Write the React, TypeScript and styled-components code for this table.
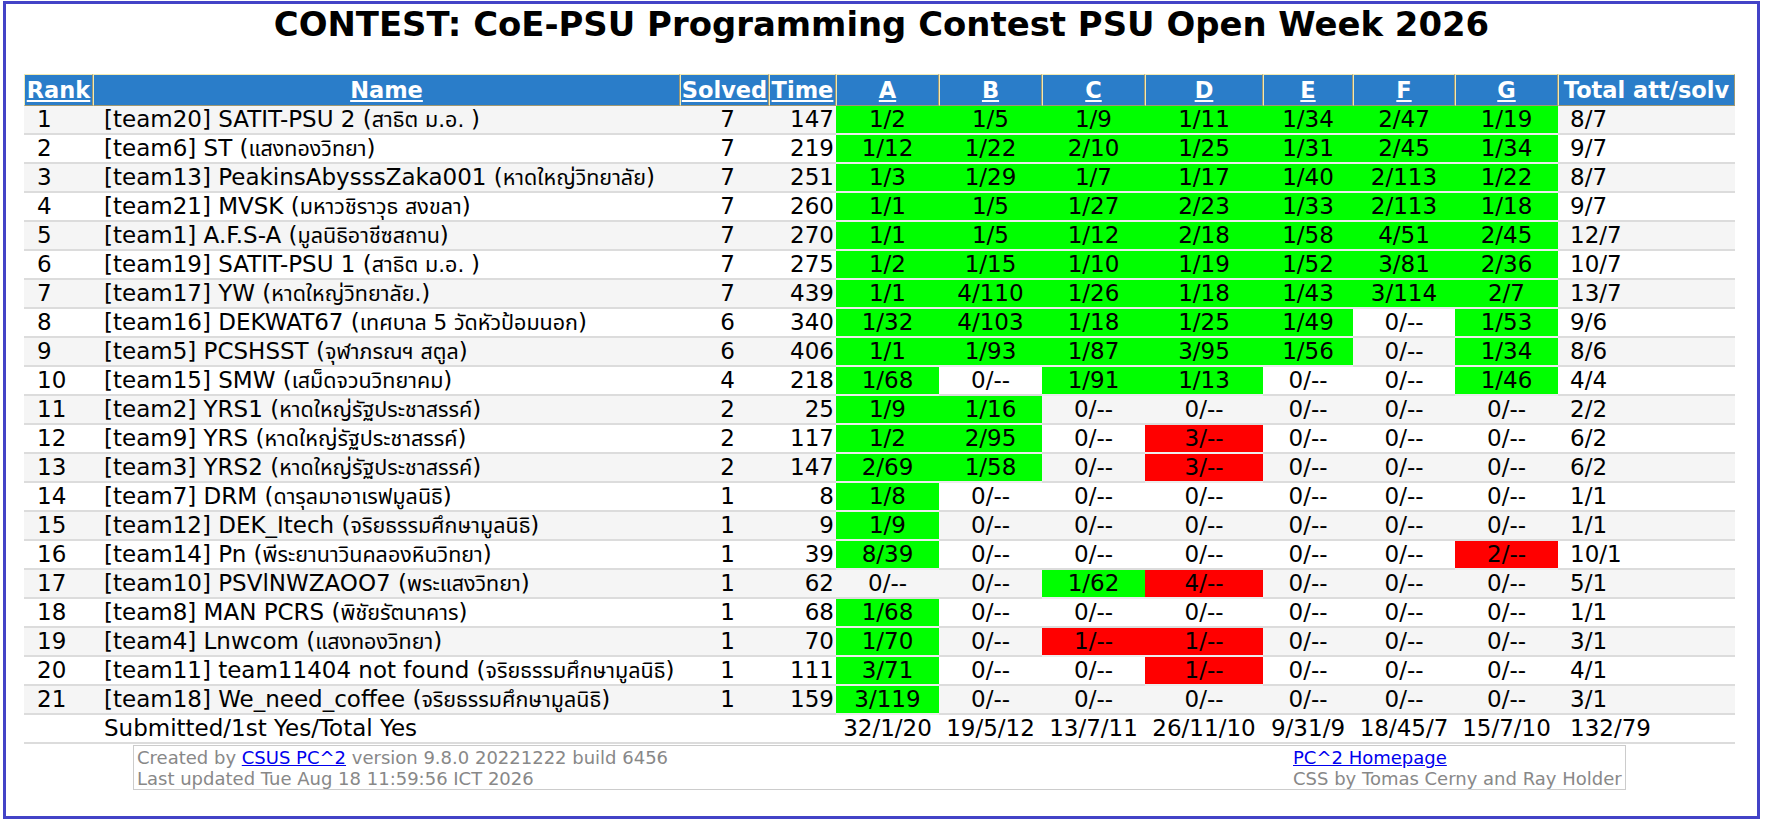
import React from 'react';
import styled, { createGlobalStyle } from 'styled-components';

const GlobalStyle = createGlobalStyle`
  html, body { margin: 0; padding: 0; background: #fff; }
  body { font-family: "DejaVu Sans", "Noto Sans Thai", "Noto Sans", sans-serif; color: #000; }
`;

const FONT = `"DejaVu Sans", "Noto Sans Thai", "Noto Sans", sans-serif`;

const Frame = styled.div`
  box-sizing: border-box;
  width: 1757px;
  height: 818px;
  margin: 1px 0 0 3px;
  border: 3px solid #4343c7;
  background: #fff;
  overflow: hidden;
`;

const Title = styled.h1`
  margin: 1px 0 29px;
  font: bold 33.9px/40px ${FONT};
  text-align: center;
  color: #000;
  white-space: nowrap;
`;

const Board = styled.table`
  table-layout: fixed;
  border-collapse: separate;
  border-spacing: 0;
  width: 1711px;
  margin-left: 18px;
`;

const HeadCell = styled.th`
  box-sizing: border-box;
  height: 32px;
  padding: 0;
  background: #2a7dc9;
  border: 1px outset #f2e9b0;
  font: bold 22.5px/30px ${FONT};
  color: #fff;
  text-align: center;
  white-space: nowrap;
  overflow: hidden;
`;

const HeadLink = styled.a`
  color: #fff;
  text-decoration: underline;
  cursor: pointer;
`;

const Row = styled.tr<{ $shade?: boolean }>`
  background: ${(p) => (p.$shade ? '#f5f5f5' : '#ffffff')};
`;

type Align = 'left' | 'center' | 'right';

const Cell = styled.td<{ $align?: Align; $pad?: string; $status?: 'yes' | 'no' }>`
  box-sizing: border-box;
  height: 29px;
  padding: ${(p) => p.$pad ?? '0 12px'};
  border-bottom: 2px solid ${(p) => (p.$status ? '#ececec' : '#dcdcdc')};
  background: ${(p) => (p.$status === 'yes' ? '#00ff00' : p.$status === 'no' ? '#ff0000' : 'transparent')};
  font: 23px/27px ${FONT};
  text-align: ${(p) => p.$align ?? 'left'};
  white-space: nowrap;
  overflow: hidden;
`;

const School = styled.span`
  font-size: 21.5px;
`;

const Footer = styled.div`
  box-sizing: border-box;
  width: 1493px;
  height: 45px;
  margin: 1px 0 0 127px;
  border: 1px solid #cccccc;
  display: grid;
  grid-template-columns: 1156px 1fr;
  padding: 1px 0 0 3px;
  font: 18px/21px ${FONT};
  color: #888888;
`;

const FooterCol = styled.div`
  display: flex;
  flex-direction: column;
  white-space: nowrap;
`;

const FootLink = styled.a`
  color: #0000ee;
  text-decoration: underline;
  cursor: pointer;
`;

type Team = {
  name: string;
  school: string;
  solved: number;
  time: number;
  probs: string[];
  total: string;
};

const teams: Team[] = [
  { name: '[team20] SATIT-PSU 2', school: 'สาธิต ม.อ. ', solved: 7, time: 147, probs: ['1/2', '1/5', '1/9', '1/11', '1/34', '2/47', '1/19'], total: '8/7' },
  { name: '[team6] ST', school: 'แสงทองวิทยา', solved: 7, time: 219, probs: ['1/12', '1/22', '2/10', '1/25', '1/31', '2/45', '1/34'], total: '9/7' },
  { name: '[team13] PeakinsAbysssZaka001', school: 'หาดใหญ่วิทยาลัย', solved: 7, time: 251, probs: ['1/3', '1/29', '1/7', '1/17', '1/40', '2/113', '1/22'], total: '8/7' },
  { name: '[team21] MVSK', school: 'มหาวชิราวุธ สงขลา', solved: 7, time: 260, probs: ['1/1', '1/5', '1/27', '2/23', '1/33', '2/113', '1/18'], total: '9/7' },
  { name: '[team1] A.F.S-A', school: 'มูลนิธิอาชีซสถาน', solved: 7, time: 270, probs: ['1/1', '1/5', '1/12', '2/18', '1/58', '4/51', '2/45'], total: '12/7' },
  { name: '[team19] SATIT-PSU 1', school: 'สาธิต ม.อ. ', solved: 7, time: 275, probs: ['1/2', '1/15', '1/10', '1/19', '1/52', '3/81', '2/36'], total: '10/7' },
  { name: '[team17] YW', school: 'หาดใหญ่วิทยาลัย.', solved: 7, time: 439, probs: ['1/1', '4/110', '1/26', '1/18', '1/43', '3/114', '2/7'], total: '13/7' },
  { name: '[team16] DEKWAT67', school: 'เทศบาล 5 วัดหัวป้อมนอก', solved: 6, time: 340, probs: ['1/32', '4/103', '1/18', '1/25', '1/49', '0/--', '1/53'], total: '9/6' },
  { name: '[team5] PCSHSST', school: 'จุฬาภรณฯ สตูล', solved: 6, time: 406, probs: ['1/1', '1/93', '1/87', '3/95', '1/56', '0/--', '1/34'], total: '8/6' },
  { name: '[team15] SMW', school: 'เสม็ดจวนวิทยาคม', solved: 4, time: 218, probs: ['1/68', '0/--', '1/91', '1/13', '0/--', '0/--', '1/46'], total: '4/4' },
  { name: '[team2] YRS1', school: 'หาดใหญ่รัฐประชาสรรค์', solved: 2, time: 25, probs: ['1/9', '1/16', '0/--', '0/--', '0/--', '0/--', '0/--'], total: '2/2' },
  { name: '[team9] YRS', school: 'หาดใหญ่รัฐประชาสรรค์', solved: 2, time: 117, probs: ['1/2', '2/95', '0/--', '3/--', '0/--', '0/--', '0/--'], total: '6/2' },
  { name: '[team3] YRS2', school: 'หาดใหญ่รัฐประชาสรรค์', solved: 2, time: 147, probs: ['2/69', '1/58', '0/--', '3/--', '0/--', '0/--', '0/--'], total: '6/2' },
  { name: '[team7] DRM', school: 'ดารุลมาอาเรฟมูลนิธิ', solved: 1, time: 8, probs: ['1/8', '0/--', '0/--', '0/--', '0/--', '0/--', '0/--'], total: '1/1' },
  { name: '[team12] DEK_Itech', school: 'จริยธรรมศึกษามูลนิธิ', solved: 1, time: 9, probs: ['1/9', '0/--', '0/--', '0/--', '0/--', '0/--', '0/--'], total: '1/1' },
  { name: '[team14] Pn', school: 'พีระยานาวินคลองหินวิทยา', solved: 1, time: 39, probs: ['8/39', '0/--', '0/--', '0/--', '0/--', '0/--', '2/--'], total: '10/1' },
  { name: '[team10] PSVlNWZAOO7', school: 'พระแสงวิทยา', solved: 1, time: 62, probs: ['0/--', '0/--', '1/62', '4/--', '0/--', '0/--', '0/--'], total: '5/1' },
  { name: '[team8] MAN PCRS', school: 'พิชัยรัตนาคาร', solved: 1, time: 68, probs: ['1/68', '0/--', '0/--', '0/--', '0/--', '0/--', '0/--'], total: '1/1' },
  { name: '[team4] Lnwcom', school: 'แสงทองวิทยา', solved: 1, time: 70, probs: ['1/70', '0/--', '1/--', '1/--', '0/--', '0/--', '0/--'], total: '3/1' },
  { name: '[team11] team11404 not found', school: 'จริยธรรมศึกษามูลนิธิ', solved: 1, time: 111, probs: ['3/71', '0/--', '0/--', '1/--', '0/--', '0/--', '0/--'], total: '4/1' },
  { name: '[team18] We_need_coffee', school: 'จริยธรรมศึกษามูลนิธิ', solved: 1, time: 159, probs: ['3/119', '0/--', '0/--', '0/--', '0/--', '0/--', '0/--'], total: '3/1' },
];

const problems = ['A', 'B', 'C', 'D', 'E', 'F', 'G'];
const summary = ['32/1/20', '19/5/12', '13/7/11', '26/11/10', '9/31/9', '18/45/7', '15/7/10'];
const colWidths = [69, 587, 89, 67, 103, 103, 103, 118, 90, 102, 103, 177];

function statusOf(v: string): 'yes' | 'no' | undefined {
  if (v.startsWith('0/')) return undefined;
  if (v.endsWith('--')) return 'no';
  return 'yes';
}

export default function App() {
  return (
    <>
      <GlobalStyle />
      <Frame>
        <Title>CONTEST: CoE-PSU Programming Contest PSU Open Week 2026</Title>
        <Board>
          <colgroup>
            {colWidths.map((w, i) => (
              <col key={i} style={{ width: w }} />
            ))}
          </colgroup>
          <thead>
            <tr>
              <HeadCell><HeadLink>Rank</HeadLink></HeadCell>
              <HeadCell><HeadLink>Name</HeadLink></HeadCell>
              <HeadCell><HeadLink>Solved</HeadLink></HeadCell>
              <HeadCell><HeadLink>Time</HeadLink></HeadCell>
              {problems.map((p) => (
                <HeadCell key={p}><HeadLink>{p}</HeadLink></HeadCell>
              ))}
              <HeadCell>Total att/solv</HeadCell>
            </tr>
          </thead>
          <tbody>
            {teams.map((t, i) => (
              <Row key={t.name} $shade={i % 2 === 0}>
                <Cell $pad="0 0 0 13px">{i + 1}</Cell>
                <Cell $pad="0 0 0 11px">
                  {t.name} (<School>{t.school}</School>)
                </Cell>
                <Cell $align="center" $pad="0 0 0 6px">{t.solved}</Cell>
                <Cell $align="right" $pad="0 2px 0 0">{t.time}</Cell>
                {t.probs.map((v, j) => (
                  <Cell key={j} $align="center" $pad="0" $status={statusOf(v)}>{v}</Cell>
                ))}
                <Cell $pad="0 0 0 12px">{t.total}</Cell>
              </Row>
            ))}
            <Row>
              <Cell />
              <Cell $pad="0 0 0 11px">Submitted/1st Yes/Total Yes</Cell>
              <Cell />
              <Cell />
              {summary.map((s, j) => (
                <Cell key={j} $align="center" $pad="0">{s}</Cell>
              ))}
              <Cell $pad="0 0 0 12px">132/79</Cell>
            </Row>
          </tbody>
        </Board>
        <Footer>
          <FooterCol>
            <span>Created by <FootLink>CSUS PC^2</FootLink> version 9.8.0 20221222 build 6456</span>
            <span>Last updated Tue Aug 18 11:59:56 ICT 2026</span>
          </FooterCol>
          <FooterCol>
            <span><FootLink>PC^2 Homepage</FootLink></span>
            <span>CSS by Tomas Cerny and Ray Holder</span>
          </FooterCol>
        </Footer>
      </Frame>
    </>
  );
}
